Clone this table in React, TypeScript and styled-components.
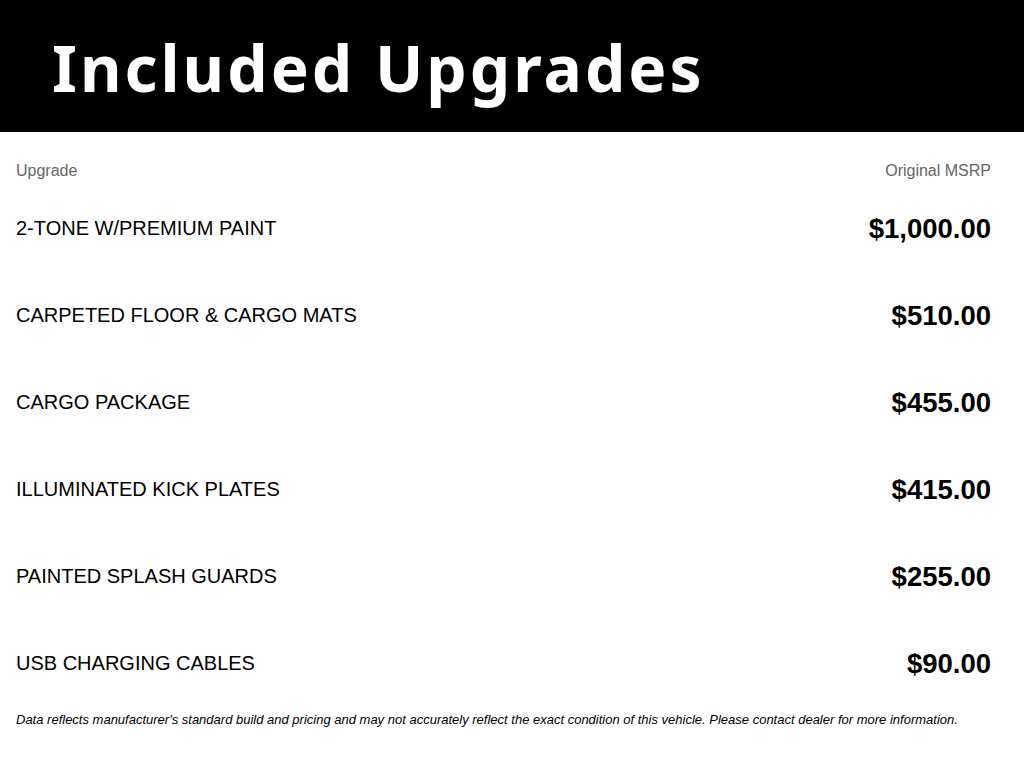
import React from 'react';
import styled, { createGlobalStyle } from 'styled-components';

const GlobalStyle = createGlobalStyle`
  html, body {
    margin: 0;
    padding: 0;
    background: #ffffff;
  }
  body {
    font-family: "Liberation Sans", Arial, sans-serif;
    color: #000;
  }
`;

const Page = styled.div`
  width: 1024px;
  min-height: 768px;
  background: #fff;
`;

const Banner = styled.header`
  height: 132px;
  background: #000;
  display: flex;
  align-items: center;
  padding-left: 52px;
  box-sizing: border-box;
`;

const Title = styled.h1`
  margin: 0;
  padding-top: 4px;
  color: #fff;
  font-family: "Noto Sans", "Open Sans", sans-serif;
  font-weight: 700;
  font-size: 64px;
  line-height: 1;
  letter-spacing: 3px;
`;

const Table = styled.section`
  padding: 29px 33px 0 16px;
`;

const HeadRow = styled.div`
  display: flex;
  justify-content: space-between;
  align-items: center;
  height: 20px;
  margin-bottom: 4px;
  font-size: 16px;
  color: #666;
`;

const Row = styled.div`
  display: flex;
  justify-content: space-between;
  align-items: center;
  height: 87px;
`;

const ItemName = styled.span`
  font-size: 20px;
  color: #000;
`;

const Price = styled.span`
  font-size: 27.5px;
  font-weight: 700;
  color: #000;
`;

const Disclaimer = styled.p`
  margin: 5px 0 0;
  font-size: 13px;
  line-height: 16px;
  font-style: italic;
  color: #000;
`;

const upgrades = [
  { name: '2-TONE W/PREMIUM PAINT', price: '$1,000.00' },
  { name: 'CARPETED FLOOR & CARGO MATS', price: '$510.00' },
  { name: 'CARGO PACKAGE', price: '$455.00' },
  { name: 'ILLUMINATED KICK PLATES', price: '$415.00' },
  { name: 'PAINTED SPLASH GUARDS', price: '$255.00' },
  { name: 'USB CHARGING CABLES', price: '$90.00' },
];

export default function App() {
  return (
    <Page>
      <GlobalStyle />
      <Banner>
        <Title>Included Upgrades</Title>
      </Banner>
      <Table>
        <HeadRow>
          <span>Upgrade</span>
          <span>Original MSRP</span>
        </HeadRow>
        {upgrades.map(u => (
          <Row key={u.name}>
            <ItemName>{u.name}</ItemName>
            <Price>{u.price}</Price>
          </Row>
        ))}
        <Disclaimer>
          Data reflects manufacturer's standard build and pricing and may not accurately reflect the exact condition of this vehicle. Please contact dealer for more information.
        </Disclaimer>
      </Table>
    </Page>
  );
}
